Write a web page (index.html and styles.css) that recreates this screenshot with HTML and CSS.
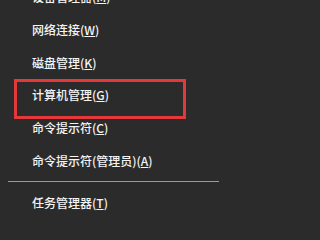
FILE: index.html
```html
<!DOCTYPE html>
<html lang="zh-CN">
<head>
<meta charset="utf-8">
<link rel="stylesheet" href="styles.css">
</head>
<body>
<div class="menu">
  <div class="group">
    <div class="item">设备管理器(<u>M</u>)</div>
    <div class="item">网络连接(<u>W</u>)</div>
    <div class="item">磁盘管理(<u>K</u>)</div>
    <div class="item">计算机管理(<u>G</u>)</div>
    <div class="item">命令提示符(<u>C</u>)</div>
    <div class="item">命令提示符(管理员)(<u>A</u>)</div>
  </div>
  <div class="sep"></div>
  <div class="group">
    <div class="item">任务管理器(<u>T</u>)</div>
  </div>
  <div class="highlight"></div>
</div>
</body>
</html>
```
FILE: styles.css
```css
html, body {
  margin: 0;
  padding: 0;
  background: #2b2b2b;
  width: 229px;
  height: 219px;
  overflow: hidden;
}
.menu {
  position: relative;
  margin-top: -19px;
  font-family: "Noto Sans CJK SC", "Noto Sans", sans-serif;
  font-size: 12px;
  font-weight: 500;
  color: #f4f4f4;
}
.item {
  height: 32.8px;
  line-height: 32.8px;
  padding-left: 32px;
  white-space: nowrap;
}
.item u {
  text-decoration-thickness: 1px;
  text-underline-offset: 1px;
}
.sep {
  height: 1px;
  background: #9a9a9a;
  margin: 3px 10px 5px 8px;
}
.highlight {
  position: absolute;
  left: 14px;
  top: 98px;
  width: 166px;
  height: 34px;
  border: 3px solid #e5383b;
}
```
